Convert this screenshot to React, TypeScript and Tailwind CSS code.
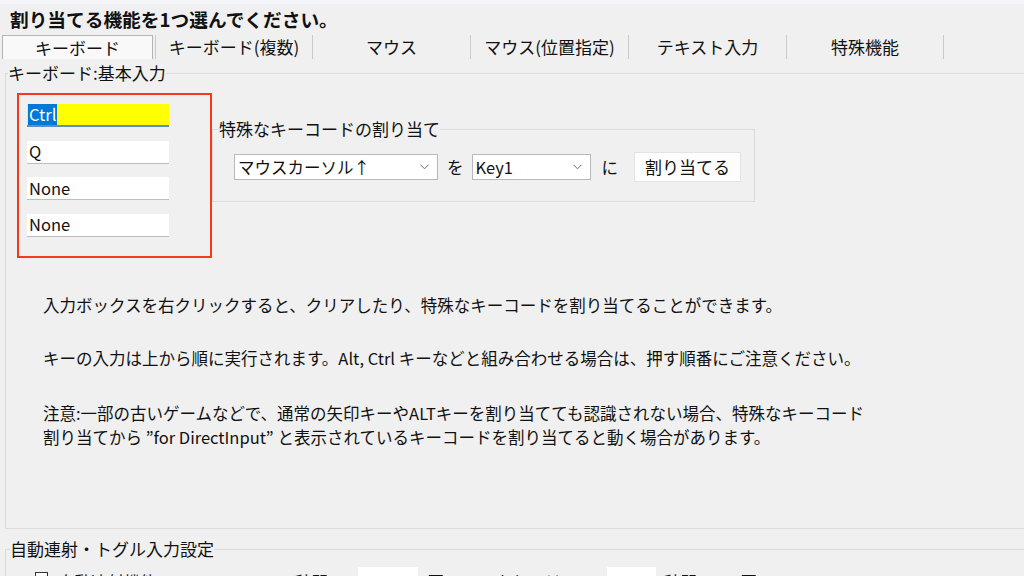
import React from "react";

const tabs = ["キーボード", "キーボード(複数)", "マウス", "マウス(位置指定)", "テキスト入力", "特殊機能"];

function Chevron() {
  return (
    <svg width="9" height="6" viewBox="0 0 9 6" className="shrink-0">
      <polyline points="0.5,0.8 4.5,4.8 8.5,0.8" fill="none" stroke="#6b6b6b" strokeWidth="1" />
    </svg>
  );
}

function ComboBox({ value, width }: { value: string; width: string }) {
  return (
    <div className={`${width} h-[26px] bg-white border border-[#b8b8b8] flex items-center justify-between pl-[3px] pr-[8px]`}>
      <span className="text-[16.5px] leading-[24px]">{value}</span>
      <Chevron />
    </div>
  );
}

function KeyBox({ value, active }: { value: string; active?: boolean }) {
  if (active) {
    return (
      <div className="w-[142px] h-[23px] bg-[#ffff00] border-b-2 border-[#5f8ec4] flex items-center pl-[1px]">
        <span className="bg-[#0078d7] text-white text-[16.5px] leading-[21px] px-[1px]">{value}</span>
      </div>
    );
  }
  return (
    <div className="w-[142px] h-[23px] bg-white border-b border-[#bdbdbd] flex items-center pl-[2px]">
      <span className="text-[16.5px] leading-[21px]">{value}</span>
    </div>
  );
}

export default function App() {
  return (
    <div className="w-[1024px] h-[576px] overflow-hidden bg-[#f0f0f0] text-[#111] font-['Noto_Sans_CJK_JP','Noto_Sans',sans-serif]">
      <div className="h-[4px] bg-[#f4f6f9]" />

      {/* title */}
      <div className="mt-[3px] pl-[10px] text-[18.7px] leading-[24px] font-bold">割り当てる機能を1つ選んでください。</div>

      {/* tab strip */}
      <div className="mt-[4px] flex h-[24px]">
        <div className="ml-[2px] w-[151px] bg-[#f9f9f9] border-t border-l border-r border-[#b5b5b5] flex items-center justify-center text-[17px] leading-[22px]">
          {tabs[0]}
        </div>
        <div className="w-[2px]" />
        {tabs.slice(1).map((t, i) => (
          <div
            key={t}
            className={`${i === 0 ? "w-[157px]" : "w-[158px]"} border-l border-[#cacaca] ${i === 4 ? "border-r" : ""} flex items-center justify-center text-[17px] leading-[22px]`}
          >
            {t}
          </div>
        ))}
      </div>

      {/* keyboard group */}
      <fieldset className="mt-[4px] ml-[5px] w-[1040px] h-[466px] border border-[#dcdcdc]">
        <legend className="ml-[2px] text-[17px] leading-[20px]">キーボード:基本入力</legend>

        <div className="flex items-start">
          <div className="mt-[10px] ml-[11px] w-[195px] h-[165px] border-2 border-[#f4391c] pl-[8px] pt-[9px] flex flex-col gap-[13.5px]">
            <KeyBox value="Ctrl" active />
            <KeyBox value="Q" />
            <KeyBox value="None" />
            <KeyBox value="None" />
          </div>

          <fieldset className="mt-[37px] w-[543px] border border-[#dcdcdc]">
            <legend className="ml-[6px] text-[17px] leading-[18px]">特殊なキーコードの割り当て</legend>
            <div className="flex items-center pl-[21px] pt-[14px] pb-[19px]">
              <ComboBox value="マウスカーソル↑" width="w-[204px]" />
              <span className="ml-[9px] text-[16.5px]">を</span>
              <div className="ml-[8px]">
                <ComboBox value="Key1" width="w-[119px]" />
              </div>
              <span className="ml-[11px] text-[16.5px]">に</span>
              <button className="ml-[16px] w-[107px] h-[30px] bg-[#fdfdfd] border border-[#e3e3e3] text-[17px] leading-[22px]">
                割り当てる
              </button>
            </div>
          </fieldset>
        </div>

        <div className="pl-[37px] text-[16.5px] leading-[24px]">
          <p className="mt-[35px]">入力ボックスを右クリックすると、クリアしたり、特殊なキーコードを割り当てることができます。</p>
          <p className="mt-[29px]">キーの入力は上から順に実行されます。Alt, Ctrl キーなどと組み合わせる場合は、押す順番にご注意ください。</p>
          <p className="mt-[31px]">
            注意:一部の古いゲームなどで、通常の矢印キーやALTキーを割り当てても認識されない場合、特殊なキーコード
            <br />
            割り当てから ”for DirectInput” と表示されているキーコードを割り当てると動く場合があります。
          </p>
        </div>
      </fieldset>

      {/* auto-fire group */}
      <fieldset className="mt-[10px] ml-[5px] w-[1040px] h-[80px] border border-[#dcdcdc]">
        <legend className="ml-[4px] text-[17px] leading-[20px]">自動連射・トグル入力設定</legend>
        <div className="mt-[8px] flex items-start text-[16.5px] leading-[24px]">
          <div className="ml-[29px] mt-[5px] w-[13px] h-[13px] bg-white border border-[#333]" />
          <span className="ml-[10px] mt-[3px]">自動連射機能</span>
          <span className="ml-[138px] mt-[3px]">秒間に</span>
          <div className="ml-[13px] w-[60px] h-[24px] bg-white" />
          <span className="ml-[10px] mt-[3px]">回</span>
          <span className="ml-[52px] mt-[3px]">もしくは</span>
          <div className="ml-[45px] w-[49px] h-[24px] bg-white" />
          <span className="ml-[8px] mt-[3px]">秒間に</span>
          <span className="ml-[27px] mt-[3px]">回</span>
        </div>
      </fieldset>
    </div>
  );
}
